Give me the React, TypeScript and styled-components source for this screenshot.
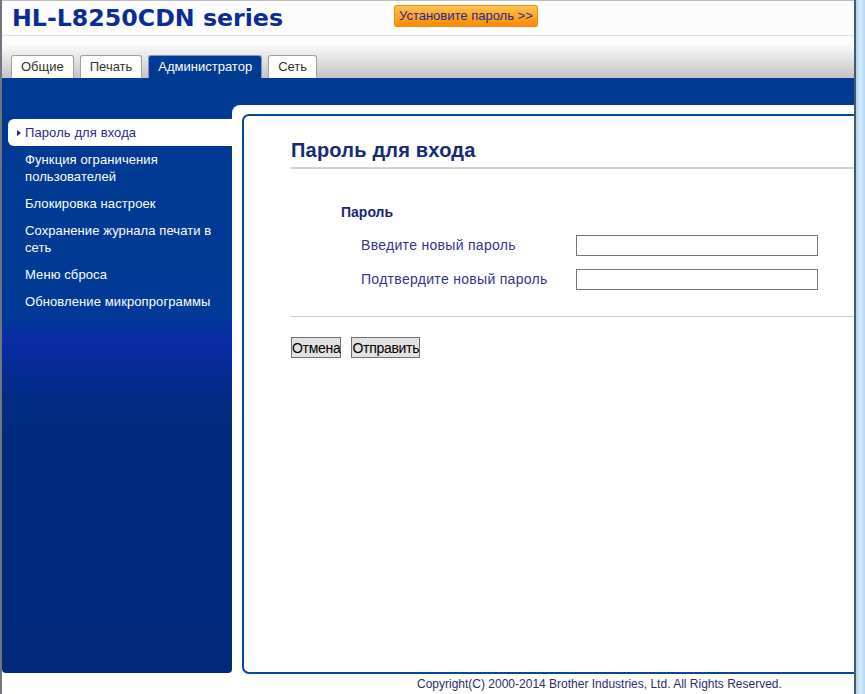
import React from "react";
import styled, { createGlobalStyle } from "styled-components";

const GlobalStyle = createGlobalStyle`
  html, body {
    margin: 0;
    padding: 0;
    background: #ffffff;
    overflow: hidden;
  }
  body {
    font-family: "Liberation Sans", Arial, sans-serif;
  }
`;

const menuItems = [
  "Пароль для входа",
  "Функция ограничения пользователей",
  "Блокировка настроек",
  "Сохранение журнала печати в сеть",
  "Меню сброса",
  "Обновление микропрограммы",
];

const tabs = ["Общие", "Печать", "Администратор", "Сеть"];

const App = () => {
  return (
    <>
      <GlobalStyle />
      <Frame>
        <Page>
          <Header>
            <Title>HL-L8250CDN series</Title>
            <SetPasswordButton>Установите пароль &gt;&gt;</SetPasswordButton>
          </Header>
          <TabBar>
            {tabs.map((t) => (
              <Tab key={t} $active={t === "Администратор"}>
                {t}
              </Tab>
            ))}
          </TabBar>
          <Band />
          <Body>
            <Sidebar>
              {menuItems.map((m, i) => (
                <MenuItem key={m} $selected={i === 0}>
                  {m}
                </MenuItem>
              ))}
            </Sidebar>
            <Main>
              <ContentBox>
                <Heading>Пароль для входа</Heading>
                <SectionTitle>Пароль</SectionTitle>
                <FieldGrid>
                  <FieldLabel>Введите новый пароль</FieldLabel>
                  <TextInput type="password" />
                  <FieldLabel>Подтвердите новый пароль</FieldLabel>
                  <TextInput type="password" />
                </FieldGrid>
                <Divider />
                <Buttons>
                  <FormButton>Отмена</FormButton>
                  <FormButton>Отправить</FormButton>
                </Buttons>
              </ContentBox>
              <Footer>
                Copyright(C) 2000-2014 Brother Industries, Ltd. All Rights
                Reserved.
              </Footer>
            </Main>
          </Body>
        </Page>
        <WindowEdge />
      </Frame>
    </>
  );
};

const Frame = styled.div`
  display: flex;
  height: 694px;
  width: 865px;
  border-left: 2px solid #6e7780;
  box-sizing: border-box;
  overflow: hidden;
`;

const Page = styled.div`
  width: 854px;
  display: flex;
  flex-direction: column;
  overflow: hidden;
`;

const WindowEdge = styled.div`
  width: 9px;
  border-left: 2px solid #4b5866;
  background: linear-gradient(90deg, #a9d2f2 0%, #d6ecfb 45%, #b4d9f4 100%);
`;

const Header = styled.div`
  display: grid;
  grid-template-columns: 382px auto;
  align-items: start;
  height: 34px;
  padding-left: 10px;
  background: #fcfcfc;
  border-top: 1px solid #bdbdbd;
  border-bottom: 1px solid #dedede;
`;

const Title = styled.div`
  font-family: "DejaVu Sans", Verdana, sans-serif;
  font-weight: bold;
  font-size: 23.7px;
  line-height: 34px;
  color: #0b2c95;
  white-space: nowrap;
`;

const SetPasswordButton = styled.div`
  justify-self: start;
  margin-top: 4px;
  height: 20px;
  line-height: 20px;
  padding: 0 4px;
  font-size: 13px;
  color: #1c2a9c;
  background: linear-gradient(#ffc24d, #ff8a00);
  border: 1px solid #e8901a;
  border-radius: 2px;
  white-space: nowrap;
`;

const TabBar = styled.div`
  display: flex;
  align-items: flex-end;
  gap: 6px;
  height: 42px;
  padding-left: 9px;
  background: linear-gradient(#fcfcfc 18%, #c4c4c4 100%);
`;

const Tab = styled.div<{ $active?: boolean }>`
  height: 22px;
  line-height: 22px;
  padding: 0 9px;
  font-size: 13px;
  color: ${(p) => (p.$active ? "#ffffff" : "#333333")};
  background: ${(p) => (p.$active ? "#003a92" : "#ffffff")};
  border: 1px solid ${(p) => (p.$active ? "#7f98c4" : "#a0a0a0")};
  border-bottom: none;
  border-radius: 3px 3px 0 0;
  white-space: nowrap;
`;

const Band = styled.div`
  height: 27px;
  background: #003a92;
`;

const Body = styled.div`
  flex: 1;
  display: flex;
  background: linear-gradient(#003a92 0 12px, #ffffff 12px);
`;

const Sidebar = styled.div`
  width: 230px;
  height: 568px;
  flex-shrink: 0;
  box-sizing: border-box;
  padding-top: 14px;
  border-radius: 0 0 4px 4px;
  background: linear-gradient(
    #003a93 0px,
    #003a96 208px,
    #0a2ba6 236px,
    #002b7e 305px,
    #00297a 100%
  );
`;

const MenuItem = styled.div<{ $selected?: boolean }>`
  margin-left: 6px;
  padding: 5px 10px 5px 17px;
  font-size: 13px;
  line-height: 17px;
  letter-spacing: 0.1px;
  color: ${(p) => (p.$selected ? "#2a2a8c" : "#ffffff")};
  background: ${(p) => (p.$selected ? "#ffffff" : "transparent")};
  border-radius: 6px 0 0 6px;

  &::before {
    content: "";
    display: ${(p) => (p.$selected ? "inline-block" : "none")};
    width: 0;
    height: 0;
    margin-left: -8px;
    margin-right: 4px;
    vertical-align: 1px;
    border-left: 4px solid #1a2a8a;
    border-top: 3px solid transparent;
    border-bottom: 3px solid transparent;
  }
`;

const Main = styled.div`
  flex: 1;
  display: flex;
  flex-direction: column;
  background: #ffffff;
  border-top-left-radius: 8px;
  overflow: hidden;
`;

const ContentBox = styled.div`
  box-sizing: border-box;
  height: 560px;
  margin: 9px -14px 0 10px;
  padding-left: 47px;
  border: 2px solid #0048a0;
  border-radius: 7px;
`;

const Heading = styled.h1`
  margin: 22px 0 0;
  padding-bottom: 5px;
  font-size: 20px;
  line-height: 24px;
  font-weight: bold;
  letter-spacing: 0.2px;
  color: #152a78;
  border-bottom: 2px solid #d2d2d2;
`;

const SectionTitle = styled.div`
  margin: 35px 0 0 50px;
  font-size: 14px;
  line-height: 17px;
  font-weight: bold;
  color: #1b2672;
`;

const FieldGrid = styled.div`
  display: grid;
  grid-template-columns: 215px 242px;
  row-gap: 13px;
  margin: 14px 0 0 70px;
`;

const FieldLabel = styled.div`
  font-size: 14px;
  line-height: 21px;
  letter-spacing: 0.3px;
  color: #34348c;
`;

const TextInput = styled.input`
  box-sizing: border-box;
  width: 242px;
  height: 21px;
  margin: 0;
  border: 1px solid #767676;
  background: #ffffff;
`;

const Divider = styled.div`
  margin-top: 26px;
  border-top: 1px solid #cdcdcd;
`;

const Buttons = styled.div`
  display: flex;
  gap: 10px;
  margin-top: 20px;
`;

const FormButton = styled.button`
  height: 21px;
  padding: 0;
  font-family: "Liberation Sans", Arial, sans-serif;
  font-size: 14px;
  letter-spacing: -0.3px;
  color: #000000;
  background: #e1e1e1;
  border: 1px solid #707070;
  border-radius: 0;
`;

const Footer = styled.div`
  padding: 3px 0 0 185px;
  font-size: 12px;
  line-height: 14px;
  color: #2c2c6e;
  white-space: nowrap;
`;

export default App;
